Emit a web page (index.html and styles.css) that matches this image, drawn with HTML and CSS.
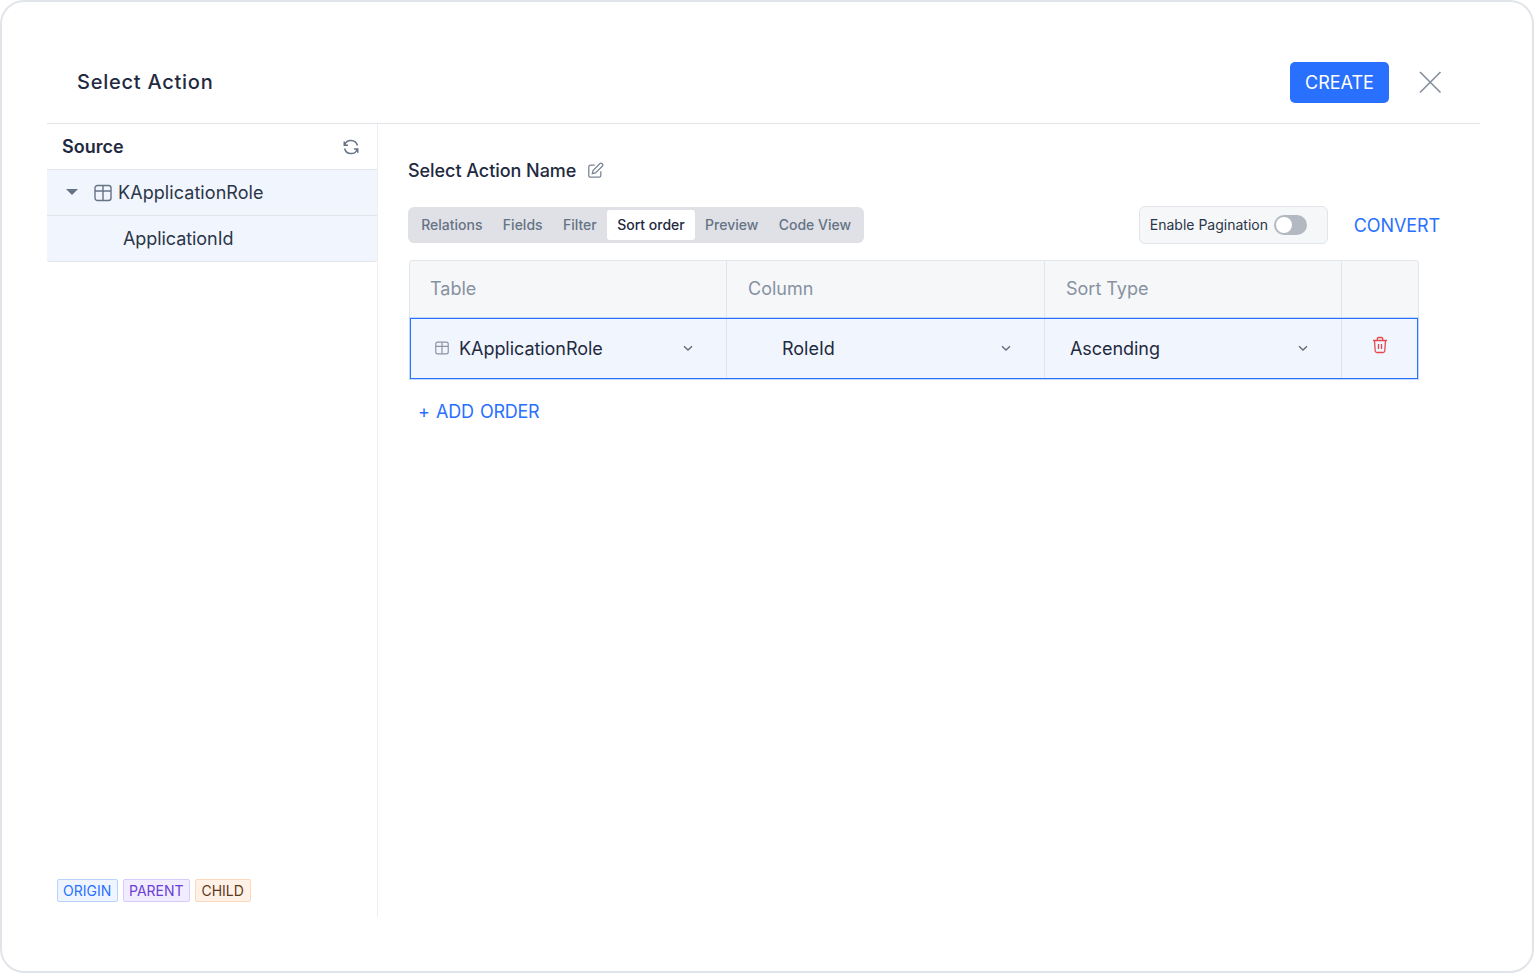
FILE: index.html
```html
<!DOCTYPE html>
<html lang="en">
<head>
<meta charset="utf-8">
<title>Select Action</title>
<link rel="stylesheet" href="styles.css">
</head>
<body>
<div class="modal">
  <header class="head">
    <h1 class="title">Select Action</h1>
    <div class="head-actions">
      <button class="create">CREATE</button>
      <svg class="close" width="24" height="24" viewBox="0 0 24 24"><path d="M2 2 L22.500 22.500 M22.500 2 L2 22.500"/></svg>
    </div>
  </header>
  <div class="content">
    <aside class="side">
      <div class="tree">
        <div class="src-row">
          <span class="src-title">Source</span>
          <svg class="ico-refresh" width="18" height="18" viewBox="0 0 24 24"><path d="M3.500 9.500A8.800 8.800 0 0 1 20.500 10M3 4.500V9.500H8M20.500 14.500A8.800 8.800 0 0 1 3.500 14M21 19.500V14.500H16"/></svg>
        </div>
        <div class="t-row t-parent">
          <span class="caret"></span>
          <svg class="ico-table" width="18" height="18" viewBox="0 0 18 18"><rect x="1" y="1.500" width="16" height="15" rx="2.500"/><path d="M1 7H17M9 1.500V16.500"/></svg>
          <span class="t-name">KApplicationRole</span>
        </div>
        <div class="t-row t-child">ApplicationId</div>
      </div>
      <div class="tags">
        <span class="tag tag-o">ORIGIN</span>
        <span class="tag tag-p">PARENT</span>
        <span class="tag tag-c">CHILD</span>
      </div>
    </aside>
    <main class="main">
      <div class="name-row">
        <span class="name">Select Action Name</span>
        <svg class="ico-edit" width="17" height="17" viewBox="0 0 24 24"><path d="M11 4.500H5a2.500 2.500 0 0 0-2.500 2.500v12A2.500 2.500 0 0 0 5 21.500h12a2.500 2.500 0 0 0 2.500-2.500v-6M18 2.500a2.400 2.400 0 0 1 3.500 3.500L12 15.500l-4.500 1 1-4.500z"/></svg>
      </div>
      <div class="toolbar">
        <nav class="tabs">
          <span class="tab">Relations</span>
          <span class="tab">Fields</span>
          <span class="tab">Filter</span>
          <span class="tab tab-on">Sort order</span>
          <span class="tab">Preview</span>
          <span class="tab">Code View</span>
        </nav>
        <div class="tool-right">
          <div class="paging">
            <span>Enable Pagination</span>
            <span class="toggle"><span class="knob"></span></span>
          </div>
          <span class="convert">CONVERT</span>
        </div>
      </div>
      <div class="grid">
        <div class="cell th th-first">Table</div>
        <div class="cell th">Column</div>
        <div class="cell th">Sort Type</div>
        <div class="cell th last"></div>
        <div class="row">
          <div class="cell td td-table">
            <svg class="ico-table small" width="14" height="14" viewBox="0 0 18 18"><rect x="1" y="1.500" width="16" height="15" rx="2.500"/><path d="M1 7H17M9 1.500V16.500"/></svg>
            <span class="grow narrow">KApplicationRole</span>
            <svg class="chev" width="12" height="12" viewBox="0 0 12 12"><path d="M2 4.200 L6 8 L10 4.200"/></svg>
          </div>
          <div class="cell td td-col">
            <span class="grow">RoleId</span>
            <svg class="chev" width="12" height="12" viewBox="0 0 12 12"><path d="M2 4.200 L6 8 L10 4.200"/></svg>
          </div>
          <div class="cell td td-sort">
            <span class="grow narrow">Ascending</span>
            <svg class="chev" width="12" height="12" viewBox="0 0 12 12"><path d="M2 4.200 L6 8 L10 4.200"/></svg>
          </div>
          <div class="cell td td-del last">
            <svg class="trash" width="18" height="18" viewBox="0 0 18 18"><path d="M2 4.500H16M6.300 4.500V2.800a1.300 1.300 0 0 1 1.300-1.300h2.800a1.300 1.300 0 0 1 1.300 1.300V4.500M3.500 4.500l.7 10.500a1.800 1.800 0 0 0 1.800 1.500h6a1.800 1.800 0 0 0 1.800-1.500l.7-10.500M7.500 8v5M10.500 8v5"/></svg>
          </div>
        </div>
      </div>
      <div class="add">+ ADD ORDER</div>
    </main>
  </div>
</div>
</body>
</html>
```
FILE: styles.css
```css
* { box-sizing: border-box; }
html, body { margin: 0; padding: 0; background: #fff; }
body { font-family: Inter, "Liberation Sans", sans-serif; color: #1f2a40; }
.modal {
  width: 1534px; height: 973px; border: 2px solid #e1e5ea; border-radius: 24px;
  padding: 0 52px 0 45px; background: #fff;
}
.head {
  height: 122px; border-bottom: 1px solid #e1e5ea;
  display: flex; align-items: center; justify-content: space-between;
  padding: 40px 38px 0 30px;
}
.title { margin: 0 0 2px; font-size: 20px; font-weight: 500; letter-spacing: 0.75px; color: #1f2a40; }
.head-actions { display: flex; align-items: center; gap: 29px; }
.create {
  width: 99px; height: 41px; border: 0; border-radius: 5px; background: #2970ff; color: #fff;
  font: 400 18px Inter, sans-serif; padding: 0;
}
.close { fill: none; stroke: #87919c; stroke-width: 1.700; margin-bottom: 2px; }
.content { display: flex; height: 793px; }
.side {
  width: 331px; border-right: 1px solid #eceef1; display: flex; flex-direction: column;
  justify-content: space-between; padding-bottom: 15px;
}
.src-row {
  height: 46px; border-bottom: 1px solid #e1e5ea; display: flex; align-items: center;
  justify-content: space-between; padding: 0 17px 0 15px;
}
.src-title { font-size: 18px; font-weight: 600; color: #1f2a40; }
.ico-refresh { fill: none; stroke: #667385; stroke-width: 2; }
.t-row { height: 46px; background: #f1f5fd; border-bottom: 1px solid #e1e5ea; display: flex; align-items: center; font-size: 18px; color: #2b3548; }
.t-parent { padding-left: 19px; }
.t-name { letter-spacing: 0.07px; }
.t-child { padding-left: 76px; letter-spacing: -0.07px; border-radius: 0 0 2px 2px; }
.caret { width: 0; height: 0; border-left: 6px solid transparent; border-right: 6px solid transparent; border-top: 6px solid #667385; margin-right: 16px; position: relative; top: -1px; }
.ico-table { fill: none; stroke: #667385; stroke-width: 1.400; margin-right: 6px; }
.ico-table.small { margin-right: 10px; stroke: #8a94a3; stroke-width: 1.500; }
.tags { display: flex; gap: 5px; padding-left: 10px; }
.tag { height: 23px; display: flex; align-items: center; padding: 0 5.800px 0 5px; font-size: 14px; border: 1px solid; border-radius: 2px; }
.tag-o { color: #2970ff; background: #eff5ff; border-color: #b9d2ff; }
.tag-p { color: #6a3fd4; background: #f1ecff; border-color: #d6cbfa; }
.tag-c { color: #5c3a21; background: #fff1e6; border-color: #fcd9bd; }
.main { flex: 1; padding: 0 40px 0 30px; }
.name-row { display: flex; align-items: flex-start; gap: 11px; padding-top: 36px; height: 82px; }
.name { font-size: 18px; font-weight: 500; color: #1f2a40; line-height: 22px; letter-spacing: -0.05px; }
.ico-edit { fill: none; stroke: #7a8594; stroke-width: 1.800; margin-top: 2px; }
.toolbar { display: flex; align-items: center; justify-content: space-between; height: 38px; }
.tabs { display: flex; height: 36px; padding: 3px; background: #dfe1e6; border-radius: 6px; }
.tab { display: flex; align-items: center; padding: 0 10.200px 1px; font-size: 14px; color: #667385; font-weight: 500; border-radius: 3px; }
.tab-on { background: #fff; color: #1f2a40; }
.tool-right { display: flex; align-items: center; gap: 26px; }
.paging {
  width: 189px; height: 38px; background: #f6f7f9; border: 1px solid #e1e5ea; border-radius: 6px;
  display: flex; align-items: center; padding: 0 0 1px 10px; gap: 6px; font-size: 14px; color: #2b3548;
}
.toggle { width: 33px; height: 20px; background: #b3b9c1; border-radius: 10px; padding: 2px; display: block; }
.knob { display: block; width: 16px; height: 16px; background: #fff; border-radius: 50%; }
.convert { font-size: 18px; color: #2970ff; letter-spacing: -0.1px; }
.grid {
  width: 1010px; margin: 16px 0 0 1px; display: grid; grid-template-columns: 318px 318px 297px 77px;
  grid-template-rows: 58px 61px;
}
.cell { display: flex; align-items: center; font-size: 18px; }
.th { background: #f6f7f9; color: #8792a1; padding: 0 0 3px 21px; border-top: 1px solid #e4e6ea; border-right: 1px solid #e1e5ea; }
.th-first { border-left: 1px solid #e4e6ea; border-top-left-radius: 4px; padding-left: 20px; }
.th.last { border-right: 1px solid #e4e6ea; border-top-right-radius: 4px; }
.row {
  grid-column: 1 / -1; display: grid; grid-template-columns: 316px 318px 297px 75px;
  margin: 0 1px; border: 1px solid #2970ff; outline: 1px solid #c3d6fb; background: #f1f5fd;
}
.td { color: #1f2a40; border-right: 1px solid #dfe3ea; padding-bottom: 1px; }
.td.last { border-right: 0; }
.grow { flex: 1; }
.narrow { letter-spacing: -0.05px; }
.td-table { padding: 0 32px 1px 24px; }
.td-col { padding: 0 32px 1px 55px; }
.td-sort { padding: 0 32px 1px 25px; }
.td-del { justify-content: center; align-items: flex-start; padding: 17px 0 0 1px; }
.chev { fill: none; stroke: #5f6b7b; stroke-width: 1.300; }
.trash { fill: none; stroke: #e5484d; stroke-width: 1.300; }
.add { margin: 22px 0 0 10px; font-size: 18px; color: #2970ff; letter-spacing: -0.25px; word-spacing: 1.500px; }
```
